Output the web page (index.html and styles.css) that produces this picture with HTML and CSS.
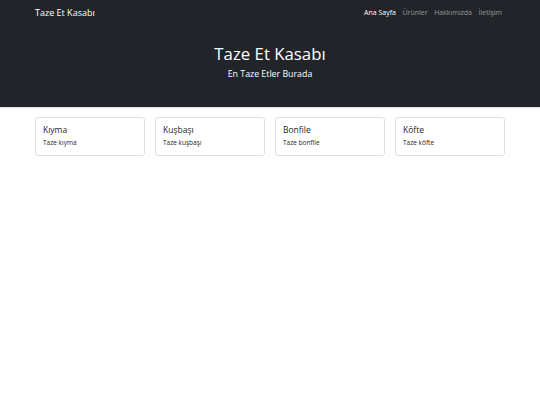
FILE: index.html
```html
<!DOCTYPE html>
<html lang="tr">
<head>
  <meta charset="UTF-8">
  <meta name="viewport" content="width=device-width, initial-scale=1.0">
  <title>Taze Et Kasabı</title>
  <link rel="stylesheet" href="styles.css">
</head>
<body>
  <header class="site-header">
    <nav class="navbar">
      <a class="brand" href="#">Taze Et Kasabı</a>
      <ul class="nav-links">
        <li><a class="active" href="#">Ana Sayfa</a></li>
        <li><a href="#">Ürünler</a></li>
        <li><a href="#">Hakkımızda</a></li>
        <li><a href="#">İletişim</a></li>
      </ul>
    </nav>
    <div class="hero">
      <h1>Taze Et Kasabı</h1>
      <p class="lead">En Taze Etler Burada</p>
    </div>
  </header>

  <main class="products">
    <div class="card">
      <h5>Kıyma</h5>
      <p>Taze kıyma</p>
    </div>
    <div class="card">
      <h5>Kuşbaşı</h5>
      <p>Taze kuşbaşı</p>
    </div>
    <div class="card">
      <h5>Bonfile</h5>
      <p>Taze bonfile</p>
    </div>
    <div class="card">
      <h5>Köfte</h5>
      <p>Taze köfte</p>
    </div>
  </main>
</body>
</html>
```

FILE: styles.css
```css
body {
  margin: 0;
  padding: 0;
  font-family: "Open Sans", "Noto Sans", sans-serif;
  background-color: #fff;
  color: #212529;
}

a {
  text-decoration: none;
}

.site-header {
  background-color: #212529;
  color: #fff;
  height: 107px;
  border-bottom: 1px solid #e5e5e5;
}

.navbar {
  width: 470px;
  margin: 0 auto;
  height: 25px;
  display: flex;
  align-items: center;
  justify-content: space-between;
  line-height: 1;
}

.brand {
  color: #fff;
  font-size: 9px;
}

.nav-links {
  list-style: none;
  margin: 0 3px 0 0;
  padding: 0;
  display: flex;
  gap: 6.5px;
  font-size: 7px;
}

.nav-links a {
  color: rgba(255, 255, 255, 0.5);
}

.nav-links a.active {
  color: #fff;
}

.hero {
  text-align: center;
  padding-top: 19px;
}

.hero h1 {
  margin: 0;
  font-size: 16.8px;
  font-weight: 400;
  line-height: 1.2;
}

.hero .lead {
  margin: 4px 0 0;
  font-size: 8.8px;
  font-weight: 400;
}

.products {
  width: 470px;
  margin: 9px auto 0;
  display: grid;
  grid-template-columns: repeat(4, 1fr);
  gap: 10px;
}

.card {
  border: 1px solid #dfdfdf;
  border-radius: 3px;
  padding: 6px 7px 7px;
  height: 24px;
}

.card h5 {
  margin: 0 0 3px;
  font-size: 8.5px;
  font-weight: 400;
}

.card p {
  margin: 0;
  font-size: 6.5px;
}
```
